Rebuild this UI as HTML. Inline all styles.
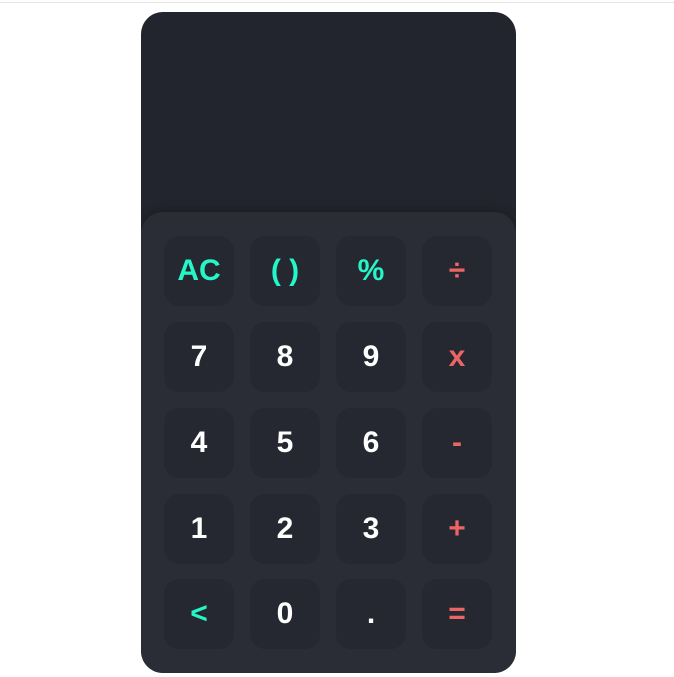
<!DOCTYPE html>
<html><head><style>
body{margin:0;width:674px;height:677px;background:#fff;position:relative;overflow:hidden;font-family:"Liberation Sans",Arial,sans-serif}
.line{position:absolute;top:2px;left:0;width:674px;height:1px;background:#e5e5e5}
.calc{position:absolute;left:141px;top:12px;width:375px;height:661px;background:#22252d;border-radius:22px;overflow:hidden}
.pad{position:absolute;left:0;top:200px;width:375px;height:461px;background:#2a2d36;border-radius:22px 22px 0 0;box-shadow:0 -4px 8px rgba(0,0,0,0.15)}
.b{position:absolute;width:70px;height:70px;border-radius:15px;background:#252830;color:#fff;font-weight:bold;font-size:30px;display:flex;align-items:center;justify-content:center}
.t{color:#26f5c8}.r{color:#ec6565}
</style></head><body>
<div class="line"></div>
<div class="calc"><div class="pad">
<div class="b t" style="left:23px;top:24px">AC</div>
<div class="b t" style="left:109px;top:24px">( )</div>
<div class="b t" style="left:195px;top:24px">%</div>
<div class="b r" style="left:281px;top:24px">÷</div>
<div class="b" style="left:23px;top:110px">7</div>
<div class="b" style="left:109px;top:110px">8</div>
<div class="b" style="left:195px;top:110px">9</div>
<div class="b r" style="left:281px;top:110px">x</div>
<div class="b" style="left:23px;top:196px">4</div>
<div class="b" style="left:109px;top:196px">5</div>
<div class="b" style="left:195px;top:196px">6</div>
<div class="b r" style="left:281px;top:196px">-</div>
<div class="b" style="left:23px;top:282px">1</div>
<div class="b" style="left:109px;top:282px">2</div>
<div class="b" style="left:195px;top:282px">3</div>
<div class="b r" style="left:281px;top:282px">+</div>
<div class="b t" style="left:23px;top:367px">&lt;</div>
<div class="b" style="left:109px;top:367px">0</div>
<div class="b" style="left:195px;top:367px">.</div>
<div class="b r" style="left:281px;top:367px">=</div>
</div></div>
</body></html>
